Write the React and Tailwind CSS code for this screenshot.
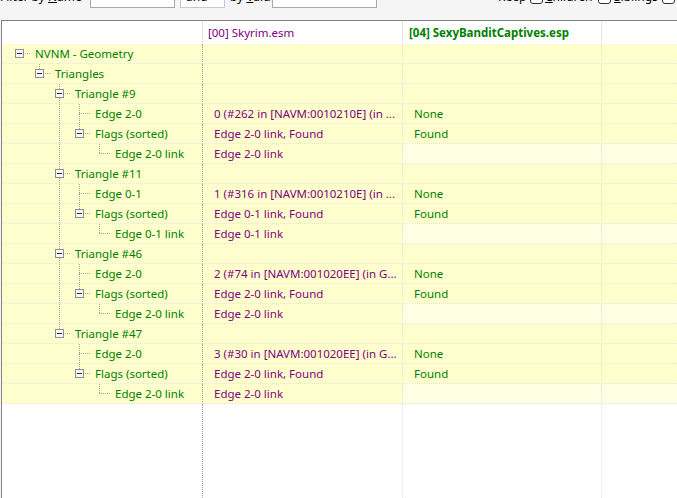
import React from "react";

const FONT = { fontFamily: "'Noto Sans', 'Open Sans', sans-serif" };

const triangle = (name, edge, ref) => ({
  label: `Triangle #${name}`,
  children: [
    { label: `Edge ${edge}`, v2: ref, v3: "None" },
    {
      label: "Flags (sorted)",
      v2: `Edge ${edge} link, Found`,
      v3: "Found",
      children: [{ label: `Edge ${edge} link`, v2: `Edge ${edge} link`, light: true }],
    },
  ],
});

const TREE = [
  {
    label: "NVNM - Geometry",
    children: [
      {
        label: "Triangles",
        children: [
          triangle("9", "2-0", "0 (#262 in [NAVM:0010210E] (in ..."),
          triangle("11", "0-1", "1 (#316 in [NAVM:0010210E] (in ..."),
          triangle("46", "2-0", "2 (#74 in [NAVM:001020EE] (in G..."),
          triangle("47", "2-0", "3 (#30 in [NAVM:001020EE] (in G..."),
        ],
      },
    ],
  },
];

function flatten(nodes, level = 0, guides = [], out = []) {
  nodes.forEach((n, i) => {
    const last = i === nodes.length - 1;
    out.push({ ...n, level, last, guides, expanded: !!n.children });
    if (n.children) flatten(n.children, level + 1, [...guides, !last && level > 0], out);
  });
  return out;
}

const ROWS = flatten(TREE);

function Guide({ on }) {
  return (
    <svg width="20" height="20" className="shrink-0 block">
      {on && <line x1="10.5" y1="0" x2="10.5" y2="20" stroke="#a0a0a0" strokeDasharray="1 1" />}
    </svg>
  );
}

function Connector({ row }) {
  const hasParent = row.level > 0;
  return (
    <svg width="26" height="20" className="shrink-0 block">
      {hasParent && <line x1="10.5" y1="0" x2="10.5" y2="9.5" stroke="#a0a0a0" strokeDasharray="1 1" />}
      {hasParent && !row.last && (
        <line x1="10.5" y1="10" x2="10.5" y2="20" stroke="#a0a0a0" strokeDasharray="1 1" />
      )}
      <line x1={row.expanded ? 16 : 10} y1="9.5" x2="22" y2="9.5" stroke="#a0a0a0" strokeDasharray="1 1" />
      {row.expanded && (
        <g>
          <rect x="6.5" y="5.5" width="8" height="8" fill="#f7f7f7" stroke="#8e8f8f" />
          <line x1="8" y1="9.5" x2="13" y2="9.5" stroke="#1f2a44" />
        </g>
      )}
    </svg>
  );
}

function Row({ row }) {
  const bg3 = row.light ? "bg-[#ffffe4]" : "bg-[#ffffcd]";
  return (
    <div className="flex h-[20px] text-[11.5px] leading-[19px]">
      <div className="w-[201px] shrink-0 flex items-start pl-[7px] bg-[#ffffcd] border-r border-b border-dotted border-r-[#9c9c9c] border-b-[#e6e6da] text-[#008000] overflow-visible">
        {row.guides.map((g, i) => (
          <Guide key={i} on={g} />
        ))}
        <Connector row={row} />
        <span className="whitespace-nowrap">{row.label}</span>
      </div>
      <div className="w-[200px] shrink-0 pl-[11px] bg-[#ffffcd] border-r border-b border-dotted border-r-[#e0e0d8] border-b-[#e6e6da] text-[#800080] whitespace-nowrap overflow-hidden">
        {row.v2}
      </div>
      <div className={`w-[199px] shrink-0 pl-[11px] ${bg3} border-r border-b border-dotted border-r-[#e0e0d8] border-b-[#e6e6da] text-[#008000] whitespace-nowrap`}>
        {row.v3}
      </div>
      <div className={`flex-1 ${bg3} border-b border-dotted border-b-[#e6e6da]`} />
    </div>
  );
}

function Label({ children, className = "" }) {
  return (
    <span className={`whitespace-nowrap text-[12px] leading-[16px] text-black ${className}`}>
      {children}
    </span>
  );
}

function Check({ className = "" }) {
  return <span className={`w-[13px] h-[13px] shrink-0 rounded-[3px] border border-[#333333] bg-white ${className}`} />;
}

export default function App() {
  return (
    <div className="w-[677px] h-[498px] overflow-hidden bg-[#f5f5f5] flex flex-col" style={FONT}>
      <div className="flex items-center h-[22px] -mt-[14px] shrink-0">
        <Label className="w-[90px]">
          Filter by <u>N</u>ame
        </Label>
        <span className="w-[85px] h-[21px] border border-[#a8a8a8] bg-white shrink-0" />
        <span className="ml-[5px] w-[45px] h-[21px] border border-[#c8c8c8] bg-white shrink-0 pl-[5px] text-[12px] leading-[17px]">
          and
        </span>
        <Label className="ml-[5px] w-[42px]">
          by <u>V</u>alue
        </Label>
        <span className="w-[105px] h-[21px] border border-[#a8a8a8] bg-white shrink-0" />
        <Label className="ml-[121px] w-[32px]">Keep</Label>
        <Check />
        <Label className="ml-[2px] w-[53px]">
          <u>C</u>hildren
        </Label>
        <Check />
        <Label className="ml-[3px] w-[48px]">
          <u>S</u>iblings
        </Label>
        <Check />
      </div>

      <div className="mt-[12px] ml-[1px] flex-1 flex flex-col bg-white border-t border-l border-[#838383]">
        <div className="flex h-[23px] shrink-0 text-[11.5px] items-stretch">
          <div className="w-[201px] shrink-0 border-r border-[#e6e6e6]" />
          <div className="w-[200px] shrink-0 border-r border-[#e6e6e6] pl-[5px] flex items-center text-[#800080] whitespace-nowrap">
            [00] Skyrim.esm
          </div>
          <div className="w-[199px] shrink-0 border-r border-[#e6e6e6] pl-[6px] flex items-center font-bold text-[#008000] whitespace-nowrap">
            [04] SexyBanditCaptives.esp
          </div>
          <div className="flex-1" />
        </div>

        {ROWS.map((row, i) => (
          <Row key={i} row={row} />
        ))}

        <div className="flex flex-1">
          <div className="w-[201px] shrink-0 border-r border-dotted border-r-[#9c9c9c]" />
          <div className="w-[200px] shrink-0 border-r border-dotted border-r-[#e4e4e4]" />
          <div className="w-[199px] shrink-0 border-r border-dotted border-r-[#e4e4e4]" />
          <div className="flex-1" />
        </div>
      </div>
    </div>
  );
}
